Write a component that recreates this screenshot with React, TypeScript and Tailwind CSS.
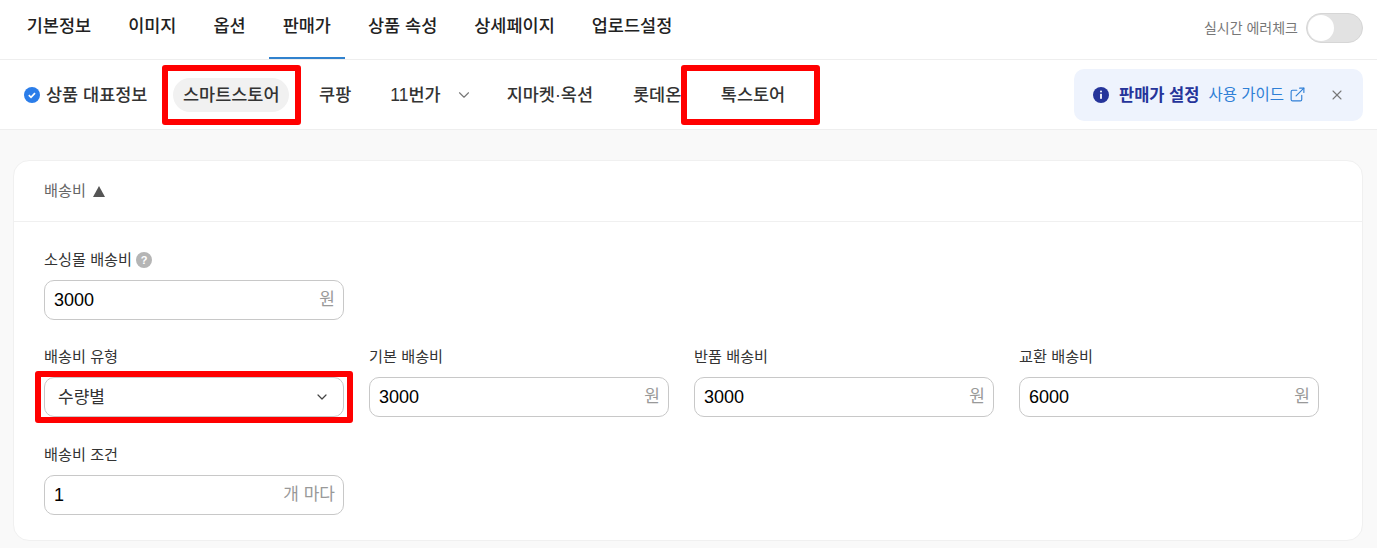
import { ChevronDown, ExternalLink, X } from "lucide-react";

const topTabs = ["기본정보", "이미지", "옵션", "판매가", "상품 속성", "상세페이지", "업로드설정"];

function Field({
  label,
  value,
  unit = "원",
  help,
  className = "",
}: {
  label: string;
  value: string;
  unit?: string;
  help?: boolean;
  className?: string;
}) {
  return (
    <div className={`w-[300px] ${className}`}>
      <div className="flex h-[20px] items-center gap-[4px] text-[15.2px] text-[#333]">
        {label}
        {help && (
          <span className="flex h-4 w-4 items-center justify-center rounded-full bg-[#b5b5b5] text-[11px] font-bold text-white">
            ?
          </span>
        )}
      </div>
      <div className="mt-[10px] flex h-10 items-center justify-between rounded-[10px] border border-[#c8c8c8] bg-white pl-[9px] pr-[8px]">
        <span className="text-[18px] text-black">{value}</span>
        <span className="text-[17px] text-[#999]">{unit}</span>
      </div>
    </div>
  );
}

export default function App() {
  return (
    <div className="relative h-[548px] w-[1377px] overflow-hidden bg-[#f9f9f9] font-['Liberation_Sans','Noto_Sans_CJK_KR',sans-serif]">
      {/* Top tabs */}
      <div className="flex h-[60px] items-stretch justify-between border-b border-[#eeeeee] bg-white pl-[13px] pr-[14px]">
        <div className="flex gap-[9.5px]">
          {topTabs.map((tab) => (
            <div
              key={tab}
              className={`flex items-center border-b-2 px-[13.75px] pb-[4px] text-[17.5px] font-medium text-[#222] ${
                tab === "판매가" ? "border-[#3182ce]" : "border-transparent"
              }`}
            >
              {tab}
            </div>
          ))}
        </div>
        <div className="flex items-center gap-2 pb-[3px]">
          <span className="text-[14px] text-[#777]">실시간 에러체크</span>
          <div className="flex h-[30px] w-[57px] items-center rounded-full border border-[#d6d6d6] bg-[#e2e2e2] p-[1px]">
            <div className="h-[26px] w-[26px] rounded-full bg-white" />
          </div>
        </div>
      </div>

      {/* Marketplace tabs */}
      <div className="flex h-[70px] items-center justify-between border-b border-[#eeeeee] bg-white pl-[24px] pr-[14px]">
        <div className="flex items-center pt-[1px] text-[17.5px] font-medium text-[#333]">
          <svg viewBox="0 0 16 16" className="mr-[6px] h-4 w-4">
            <circle cx="8" cy="8" r="8" fill="#2b7de9" />
            <path d="M4.8 8.2l2.2 2.1 4-4.2" fill="none" stroke="#fff" strokeWidth="1.7" />
          </svg>
          <span>상품 대표정보</span>
          <span className="ml-[26px] flex h-[34px] items-center rounded-full bg-[#f1f1f1] px-[9.5px]">스마트스토어</span>
          <span className="ml-[30px]">쿠팡</span>
          <span className="ml-[39px]">11번가</span>
          <ChevronDown className="ml-[14px] h-[18px] w-[18px] text-[#777]" strokeWidth={1.5} />
          <span className="ml-[34px]">지마켓·옥션</span>
          <span className="ml-[40px]">롯데온</span>
        </div>
        <div className="flex h-[52px] w-[289px] items-center rounded-[10px] bg-[#eef3fd] pl-[19px] pr-[18px]">
          <svg viewBox="0 0 16 16" className="h-4 w-4 shrink-0">
            <circle cx="8" cy="8" r="8" fill="#25349a" />
            <circle cx="8" cy="4.6" r="1" fill="#fff" />
            <rect x="7.1" y="6.8" width="1.8" height="5" fill="#fff" />
          </svg>
          <span className="ml-[10px] pt-[1px] text-[16.5px] font-bold text-[#25349a]">판매가 설정</span>
          <span className="ml-[9px] pt-[1px] text-[15.5px] text-[#2f7fd6]">사용 가이드</span>
          <ExternalLink className="ml-[5px] h-[17px] w-[17px] text-[#2f7fd6]" strokeWidth={1.6} />
          <X className="ml-auto h-4 w-4 text-[#777]" strokeWidth={1.6} />
        </div>
      </div>

      {/* Shipping card */}
      <div className="ml-[13px] mr-[14px] mt-[30px] h-[381px] rounded-[16px] border border-[#f0f0f0] bg-white">
        <div className="flex h-[61px] items-center gap-[7px] border-b border-[#f0f0f0] px-[30px] text-[15.2px] text-[#666]">
          배송비
          <span className="h-0 w-0 border-x-[6.5px] border-b-[11px] border-x-transparent border-b-[#555]" />
        </div>
        <div className="flex flex-col px-[30px] pt-[28px]">
          <Field label="소싱몰 배송비" value="3000" help />
          <div className="mt-[27px] flex gap-[25px]">
            <div className="w-[300px]">
              <div className="flex h-[20px] items-center text-[15.2px] text-[#333]">배송비 유형</div>
              <div className="mt-[10px] flex h-10 items-center justify-between rounded-[10px] border border-[#c8c8c8] bg-white pl-[13px] pr-[13px]">
                <span className="pt-[1px] text-[17px] text-[#333]">수량별</span>
                <ChevronDown className="h-4 w-4 text-[#444]" strokeWidth={1.8} />
              </div>
            </div>
            <Field label="기본 배송비" value="3000" />
            <Field label="반품 배송비" value="3000" />
            <Field label="교환 배송비" value="6000" />
          </div>
          <Field label="배송비 조건" value="1" unit="개 마다" className="mt-[28px]" />
        </div>
      </div>

      {/* Red annotation boxes */}
      <div className="absolute left-[162px] top-[65px] h-[60px] w-[139px] rounded-[3px] border-[6px] border-[#f00]" />
      <div className="absolute left-[681px] top-[65px] flex h-[60px] w-[139px] items-center justify-center rounded-[3px] border-[6px] border-[#f00] bg-white pl-[5px] pt-[1px] text-[17.5px] font-medium text-[#333]">
        톡스토어
      </div>
      <div className="absolute left-[35px] top-[371px] h-[52px] w-[318px] rounded-[3px] border-[6px] border-[#f00]" />
    </div>
  );
}
